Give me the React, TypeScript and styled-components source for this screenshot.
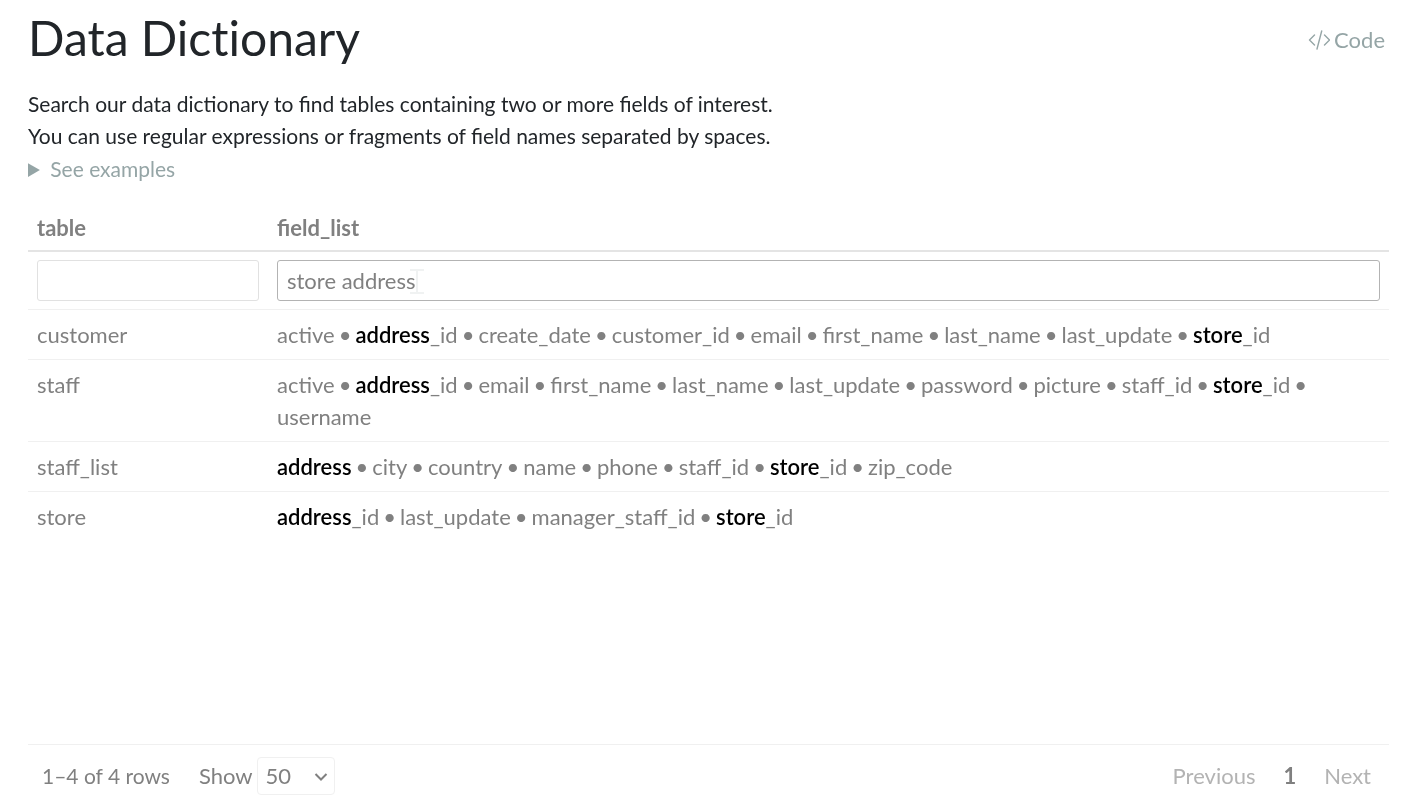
import React, { Fragment, useState } from "react";
import styled, { createGlobalStyle } from "styled-components";

const GlobalStyle = createGlobalStyle`
  *, *::before, *::after { box-sizing: border-box; }
  body {
    margin: 0;
    background: #fff;
    color: #212529;
    font-family: Lato, "Liberation Sans", sans-serif;
    font-size: 22px;
    line-height: 32px;
  }
  input, select, button { font: inherit; color: inherit; }
`;

const Page = styled.main`
  display: flex;
  flex-direction: column;
  min-height: 100vh;
  padding: 8px 30px 0 28px;
`;

const TitleBar = styled.header`
  display: flex;
  align-items: center;
  justify-content: space-between;
  margin-bottom: 20px;
  padding-right: 4px;
`;

const Title = styled.h1`
  margin: 0;
  font-size: 48px;
  font-weight: 400;
  line-height: 60px;
  font-variant-ligatures: none;
`;

const CodeButton = styled.button`
  display: flex;
  align-items: center;
  gap: 4px;
  padding: 4px 0 0;
  border: 0;
  background: none;
  color: #95a5a6;
  cursor: pointer;
`;

const Intro = styled.p`
  margin: 0;
  font-size: 21px;
`;

const Examples = styled.details`
  margin-bottom: 26px;
  color: #95a5a6;
  font-size: 21px;

  summary { cursor: pointer; line-height: 34px; }
`;

const DataTable = styled.table`
  width: 100%;
  table-layout: fixed;
  border-collapse: separate;
  border-spacing: 0;
  color: #808080;
`;

const NameColumn = styled.col`
  width: 240px;
`;

const HeadCell = styled.th`
  padding: 0 9px 6px;
  border-bottom: 2px solid #e4e4e4;
  text-align: left;
  font-weight: 700;
`;

const FilterCell = styled.td`
  padding: 8px 9px;
`;

const FilterField = styled.div`
  position: relative;
`;

const FilterInput = styled.input<{ $active?: boolean }>`
  display: block;
  width: 100%;
  height: 41px;
  padding: 0 9px;
  border: 1px solid ${(p) => (p.$active ? "#b3b3b3" : "#e1e1e1")};
  border-radius: 3px;
  background: #fff;
  outline: none;
`;

const Pointer = styled.svg`
  position: absolute;
  left: 133px;
  top: 9px;
  mix-blend-mode: multiply;
  pointer-events: none;
`;

const Cell = styled.td`
  padding: 9px 9px 8px;
  border-top: 1px solid #f0f0f0;
  vertical-align: top;
`;

const Fields = styled.div`
  display: flex;
  flex-wrap: wrap;
  column-gap: 4px;
`;

const Match = styled.span`
  color: #000;
  font-weight: 600;
`;

const Footer = styled.footer`
  display: flex;
  align-items: center;
  justify-content: space-between;
  height: 60px;
  margin-top: auto;
  padding: 2px 4px 0 14px;
  border-top: 1px solid #f0f0f0;
  color: #808080;
`;

const PageInfo = styled.div`
  display: flex;
  align-items: center;
  gap: 29px;
`;

const RowCount = styled.span`
  font-size: 21px;
`;

const SizeLabel = styled.label`
  display: flex;
  align-items: center;
  gap: 4px;
`;

const SelectWrap = styled.span`
  position: relative;
  display: flex;
`;

const SizeSelect = styled.select`
  appearance: none;
  width: 78px;
  height: 38px;
  padding: 0 8px;
  border: 1px solid #f0f0f0;
  border-radius: 4px;
  background: #fff;
`;

const Chevron = styled.svg`
  position: absolute;
  right: 7px;
  top: 13px;
  pointer-events: none;
`;

const Pages = styled.nav`
  display: flex;
`;

const PageButton = styled.button<{ $current?: boolean }>`
  padding: 0 14px;
  border: 0;
  background: none;
  font-weight: ${(p) => (p.$current ? 700 : 400)};
  color: ${(p) => (p.$current ? "#808080" : "#b3b3b3")};
`;

const rows = [
  { table: "customer", fields: "active address_id create_date customer_id email first_name last_name last_update store_id" },
  { table: "staff", fields: "active address_id email first_name last_name last_update password picture staff_id store_id username" },
  { table: "staff_list", fields: "address city country name phone staff_id store_id zip_code" },
  { table: "store", fields: "address_id last_update manager_staff_id store_id" },
];

function FieldList({ fields }: { fields: string }) {
  return (
    <Fields>
      {fields.split(" ").map((field, index) => (
        <Fragment key={field}>
          {index > 0 && <span>•</span>}
          <span>
            {field
              .split(/(store|address)/)
              .filter(Boolean)
              .map((part) =>
                part === "store" || part === "address" ? <Match key={part}>{part}</Match> : part
              )}
          </span>
        </Fragment>
      ))}
    </Fields>
  );
}

export default function App() {
  const [tableFilter, setTableFilter] = useState("");
  const [fieldFilter, setFieldFilter] = useState("store address");

  return (
    <Page>
      <GlobalStyle />
      <TitleBar>
        <Title>Data Dictionary</Title>
        <CodeButton type="button">
          <svg width="22" height="22" viewBox="0 0 22 22" fill="none" stroke="currentColor" strokeWidth="1.4" strokeLinecap="round" strokeLinejoin="round" aria-hidden="true">
            <path d="M6.500 6 1.500 11l5 5M16.500 6l5 5-5 5M13.700 2 9 20" />
          </svg>
          Code
        </CodeButton>
      </TitleBar>
      <Intro>
        Search our data dictionary to find tables containing two or more fields of interest.
        <br />
        You can use regular expressions or fragments of field names separated by spaces.
      </Intro>
      <Examples>
        <summary>See examples</summary>
      </Examples>
      <DataTable>
        <colgroup>
          <NameColumn />
          <col />
        </colgroup>
        <thead>
          <tr>
            <HeadCell scope="col">table</HeadCell>
            <HeadCell scope="col">field_list</HeadCell>
          </tr>
        </thead>
        <tbody>
          <tr>
            <FilterCell>
              <FilterInput aria-label="Filter table" value={tableFilter} onChange={(e) => setTableFilter(e.target.value)} />
            </FilterCell>
            <FilterCell>
              <FilterField>
                <FilterInput $active aria-label="Filter field_list" value={fieldFilter} onChange={(e) => setFieldFilter(e.target.value)} />
                <Pointer width="14" height="25" viewBox="0 0 14 25" fill="none" stroke="#f0f2f2" strokeWidth="2" aria-hidden="true">
                  <path d="M0 1h14M0 24h14M7 2v21" />
                </Pointer>
              </FilterField>
            </FilterCell>
          </tr>
          {rows.map((row) => (
            <tr key={row.table}>
              <Cell>{row.table}</Cell>
              <Cell><FieldList fields={row.fields} /></Cell>
            </tr>
          ))}
        </tbody>
      </DataTable>
      <Footer>
        <PageInfo>
          <RowCount>1–4 of 4 rows</RowCount>
          <SizeLabel>
            Show
            <SelectWrap>
              <SizeSelect defaultValue="50">
                <option>10</option>
                <option>25</option>
                <option>50</option>
                <option>100</option>
              </SizeSelect>
              <Chevron width="14" height="14" viewBox="0 0 14 14" fill="none" stroke="#808080" strokeWidth="2" aria-hidden="true">
                <path d="M1.500 4 7 9.500 12.500 4" />
              </Chevron>
            </SelectWrap>
          </SizeLabel>
        </PageInfo>
        <Pages aria-label="Pagination">
          <PageButton type="button" disabled>Previous</PageButton>
          <PageButton type="button" $current aria-current="page">1</PageButton>
          <PageButton type="button" disabled>Next</PageButton>
        </Pages>
      </Footer>
    </Page>
  );
}
